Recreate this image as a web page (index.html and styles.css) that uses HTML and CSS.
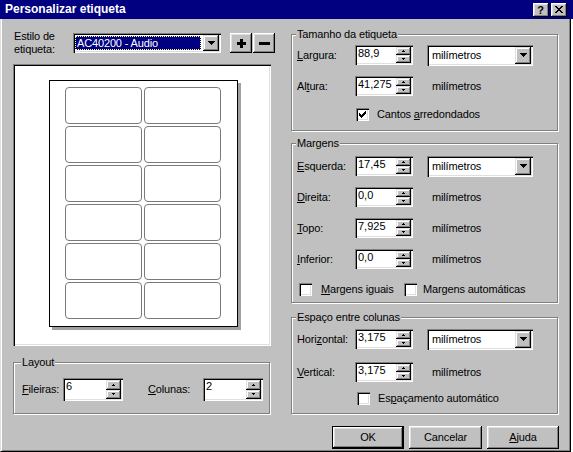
FILE: index.html
```html
<!DOCTYPE html>
<html lang="pt">
<head>
<meta charset="utf-8">
<title>Personalizar etiqueta</title>
<link rel="stylesheet" href="styles.css">
</head>
<body>
<div class="window">
  <div class="titlebar">
    <span class="title">Personalizar etiqueta</span>
    <div class="tb-buttons">
      <span class="tb-btn help">?</span>
      <span class="tb-btn close"><svg width="8" height="7" viewBox="0 0 8 7"><path d="M0 0h2v1H0zM6 0h2v1H6zM1 1h2v1H1zM5 1h2v1H5zM2 2h4v1H2zM3 3h2v1H3zM2 4h4v1H2zM1 5h2v1H1zM5 5h2v1H5zM0 6h2v1H0zM6 6h2v1H6z" fill="#000"/></svg></span>
    </div>
  </div>
  <div class="client">
    <div class="main">
      <div class="left">
        <div class="style-row">
          <span class="style-label">Estilo de<br>etiqueta:</span>
          <div class="combo style-combo">
            <span class="combo-text selected">AC40200 - Audio</span>
            <span class="drop"><svg width="7" height="4" viewBox="0 0 7 4"><path d="M0 0h7v1H6v1H5v1H4v1H3V3H2V2H1V1H0z" fill="#000"/></svg></span>
          </div>
          <div class="pm">
            <span class="btn pm-btn"><svg width="9" height="9" viewBox="0 0 9 9"><path d="M3 0h3v3h3v3H6v3H3V6H0V3h3z" fill="#000"/></svg></span>
            <span class="btn pm-btn"><svg width="11" height="3" viewBox="0 0 11 3"><path d="M0 0h11v3H0z" fill="#000"/></svg></span>
          </div>
        </div>
        <div class="preview">
          <div class="page">
            <div class="lab"></div><div class="lab"></div>
            <div class="lab"></div><div class="lab"></div>
            <div class="lab"></div><div class="lab"></div>
            <div class="lab"></div><div class="lab"></div>
            <div class="lab"></div><div class="lab"></div>
            <div class="lab"></div><div class="lab"></div>
          </div>
        </div>
        <fieldset class="group layout-group">
          <legend>Layout</legend>
          <div class="lrow">
            <span class="llabel fil"><u>F</u>ileiras:</span>
            <div class="spin tall"><span class="val">6</span><span class="arrows"><span class="up"><svg width="3" height="2" viewBox="0 0 3 2"><path d="M1 0h1v1h1v1H0V1h1z"/></svg></span><span class="down"><svg width="3" height="2" viewBox="0 0 3 2"><path d="M0 0h3v1H2v1H1V1H0z"/></svg></span></span></div>
            <span class="llabel col"><u>C</u>olunas:</span>
            <div class="spin tall"><span class="val">2</span><span class="arrows"><span class="up"><svg width="3" height="2" viewBox="0 0 3 2"><path d="M1 0h1v1h1v1H0V1h1z"/></svg></span><span class="down"><svg width="3" height="2" viewBox="0 0 3 2"><path d="M0 0h3v1H2v1H1V1H0z"/></svg></span></span></div>
          </div>
        </fieldset>
      </div>

      <div class="right">
        <fieldset class="group size-group">
          <legend>Tamanho da etiqueta</legend>
          <div class="rows">
            <div class="frow">
              <span class="flabel"><u>L</u>argura:</span>
              <div class="spin"><span class="val">88,9</span><span class="arrows"><span class="up"><svg width="3" height="2" viewBox="0 0 3 2"><path d="M1 0h1v1h1v1H0V1h1z"/></svg></span><span class="down"><svg width="3" height="2" viewBox="0 0 3 2"><path d="M0 0h3v1H2v1H1V1H0z"/></svg></span></span></div>
              <div class="combo units"><span class="combo-text">milímetros</span><span class="drop"><svg width="7" height="4" viewBox="0 0 7 4"><path d="M0 0h7v1H6v1H5v1H4v1H3V3H2V2H1V1H0z" fill="#000"/></svg></span></div>
            </div>
            <div class="frow">
              <span class="flabel">Al<u>t</u>ura:</span>
              <div class="spin"><span class="val">41,275</span><span class="arrows"><span class="up"><svg width="3" height="2" viewBox="0 0 3 2"><path d="M1 0h1v1h1v1H0V1h1z"/></svg></span><span class="down"><svg width="3" height="2" viewBox="0 0 3 2"><path d="M0 0h3v1H2v1H1V1H0z"/></svg></span></span></div>
              <span class="unit-text">milímetros</span>
            </div>
            <div class="crow size-check">
              <span class="cb"><svg width="7" height="7" viewBox="0 0 7 7"><path d="M0 2h1v3H0zM1 3h1v3H1zM2 4h1v3H2zM3 3h1v3H3zM4 2h1v3H4zM5 1h1v3H5zM6 0h1v3H6z" fill="#000"/></svg></span>
              <span class="ctext">Cantos <u>a</u>rredondados</span>
            </div>
          </div>
        </fieldset>

        <fieldset class="group margin-group">
          <legend>Margens</legend>
          <div class="rows">
            <div class="frow">
              <span class="flabel"><u>E</u>squerda:</span>
              <div class="spin"><span class="val">17,45</span><span class="arrows"><span class="up"><svg width="3" height="2" viewBox="0 0 3 2"><path d="M1 0h1v1h1v1H0V1h1z"/></svg></span><span class="down"><svg width="3" height="2" viewBox="0 0 3 2"><path d="M0 0h3v1H2v1H1V1H0z"/></svg></span></span></div>
              <div class="combo units"><span class="combo-text">milímetros</span><span class="drop"><svg width="7" height="4" viewBox="0 0 7 4"><path d="M0 0h7v1H6v1H5v1H4v1H3V3H2V2H1V1H0z" fill="#000"/></svg></span></div>
            </div>
            <div class="frow">
              <span class="flabel"><u>D</u>ireita:</span>
              <div class="spin"><span class="val">0,0</span><span class="arrows"><span class="up"><svg width="3" height="2" viewBox="0 0 3 2"><path d="M1 0h1v1h1v1H0V1h1z"/></svg></span><span class="down"><svg width="3" height="2" viewBox="0 0 3 2"><path d="M0 0h3v1H2v1H1V1H0z"/></svg></span></span></div>
              <span class="unit-text">milímetros</span>
            </div>
            <div class="frow">
              <span class="flabel"><u>T</u>opo:</span>
              <div class="spin"><span class="val">7,925</span><span class="arrows"><span class="up"><svg width="3" height="2" viewBox="0 0 3 2"><path d="M1 0h1v1h1v1H0V1h1z"/></svg></span><span class="down"><svg width="3" height="2" viewBox="0 0 3 2"><path d="M0 0h3v1H2v1H1V1H0z"/></svg></span></span></div>
              <span class="unit-text">milímetros</span>
            </div>
            <div class="frow">
              <span class="flabel"><u>I</u>nferior:</span>
              <div class="spin"><span class="val">0,0</span><span class="arrows"><span class="up"><svg width="3" height="2" viewBox="0 0 3 2"><path d="M1 0h1v1h1v1H0V1h1z"/></svg></span><span class="down"><svg width="3" height="2" viewBox="0 0 3 2"><path d="M0 0h3v1H2v1H1V1H0z"/></svg></span></span></div>
              <span class="unit-text">milímetros</span>
            </div>
            <div class="crow margin-checks">
              <div class="citem first">
                <span class="cb"></span>
                <span class="ctext"><u>M</u>argens iguais</span>
              </div>
              <div class="citem second">
                <span class="cb"></span>
                <span class="ctext">Margens automáticas</span>
              </div>
            </div>
          </div>
        </fieldset>

        <fieldset class="group gap-group">
          <legend>Espaço entre colunas</legend>
          <div class="rows">
            <div class="frow">
              <span class="flabel">Hori<u>z</u>ontal:</span>
              <div class="spin"><span class="val">3,175</span><span class="arrows"><span class="up"><svg width="3" height="2" viewBox="0 0 3 2"><path d="M1 0h1v1h1v1H0V1h1z"/></svg></span><span class="down"><svg width="3" height="2" viewBox="0 0 3 2"><path d="M0 0h3v1H2v1H1V1H0z"/></svg></span></span></div>
              <div class="combo units"><span class="combo-text">milímetros</span><span class="drop"><svg width="7" height="4" viewBox="0 0 7 4"><path d="M0 0h7v1H6v1H5v1H4v1H3V3H2V2H1V1H0z" fill="#000"/></svg></span></div>
            </div>
            <div class="frow">
              <span class="flabel"><u>V</u>ertical:</span>
              <div class="spin"><span class="val">3,175</span><span class="arrows"><span class="up"><svg width="3" height="2" viewBox="0 0 3 2"><path d="M1 0h1v1h1v1H0V1h1z"/></svg></span><span class="down"><svg width="3" height="2" viewBox="0 0 3 2"><path d="M0 0h3v1H2v1H1V1H0z"/></svg></span></span></div>
              <span class="unit-text">milímetros</span>
            </div>
            <div class="crow gap-check">
              <span class="cb"></span>
              <span class="ctext">Es<u>p</u>açamento automático</span>
            </div>
          </div>
        </fieldset>
      </div>
    </div>

    <div class="buttons">
      <span class="btn dlg-btn default">OK</span>
      <span class="btn dlg-btn wide">Cancelar</span>
      <span class="btn dlg-btn"><u>A</u>juda</span>
    </div>
  </div>
</div>
</body>
</html>
```

FILE: styles.css
```css
* { box-sizing: border-box; }

html { background: #ffffff; }

body {
  margin: 0;
  font-family: "Liberation Sans", Arial, sans-serif;
  font-size: 11px;
  letter-spacing: -0.15px;
  color: #000;
  line-height: 13px;
}

u { text-decoration: underline; text-underline-offset: 1px; }

.window {
  width: 573px;
  height: 452px;
  display: flex;
  flex-direction: column;
}

/* title bar */
.titlebar {
  height: 19px;
  flex: none;
  background: #000080;
  display: flex;
  align-items: center;
  justify-content: space-between;
  padding: 0 6px 0 5px;
}

.title {
  color: #fff;
  font-weight: bold;
  font-size: 12px;
  letter-spacing: 0;
}

.tb-buttons {
  display: flex;
  gap: 2px;
}

.tb-btn {
  width: 16px;
  height: 14px;
  background: #c0c0c0;
  box-shadow: inset -1px -1px 0 #000, inset 1px 1px 0 #fff, inset -2px -2px 0 #808080, inset 2px 2px 0 #dfdfdf;
  display: flex;
  align-items: center;
  justify-content: center;
}

.tb-btn.help {
  font-weight: bold;
  font-size: 11px;
  line-height: 12px;
  padding-right: 1px;
}

/* client area */
.client {
  flex: 1;
  width: 571px;
  background: #c0c0c0;
  border-left: 1px solid #dfdfdf;
  border-right: 1px solid #000;
  border-bottom: 1px solid #000;
  box-shadow: inset 1px 0 0 #fff, inset -1px -1px 0 #808080;
  display: flex;
  flex-direction: column;
}

.main {
  display: flex;
  padding-left: 12px;
  gap: 15px;
}

.left {
  width: 263px;
  padding-top: 11px;
  display: flex;
  flex-direction: column;
}

.right {
  width: 267px;
  padding-top: 9px;
  display: flex;
  flex-direction: column;
}

/* style row */
.style-row {
  display: flex;
  align-items: flex-start;
  height: 26px;
}

.style-label {
  width: 60px;
  padding-left: 1px;
  line-height: 13px;
}

.style-combo {
  margin-top: 3px;
  width: 148px;
  height: 20px;
}

.pm {
  margin-top: 3px;
  margin-left: 9px;
  display: flex;
  gap: 1px;
}

.btn {
  background: #c0c0c0;
  box-shadow: inset -1px -1px 0 #000, inset 1px 1px 0 #fff, inset -2px -2px 0 #808080, inset 2px 2px 0 #dfdfdf;
  display: flex;
  align-items: center;
  justify-content: center;
}

.pm-btn {
  width: 22px;
  height: 20px;
}

/* sunken controls */
.combo, .spin, .cb, .preview {
  background: #fff;
  box-shadow: inset 1px 1px 0 #808080, inset 2px 2px 0 #000, inset -1px -1px 0 #fff, inset -2px -2px 0 #dfdfdf;
}

.combo {
  display: flex;
  padding: 2px;
}

.combo-text {
  flex: 1;
  padding-left: 3px;
  line-height: 16px;
  white-space: nowrap;
}

.combo-text.selected {
  background: #000080;
  color: #fff;
  margin: 1px 2px 1px 0;
  padding-left: 2px;
  line-height: 14px;
  outline: 1px dotted #ffffa0;
  outline-offset: -1px;
}

.drop {
  width: 16px;
  background: #c0c0c0;
  box-shadow: inset -1px -1px 0 #000, inset 1px 1px 0 #dfdfdf, inset -2px -2px 0 #808080, inset 2px 2px 0 #fff;
  display: flex;
  align-items: center;
  justify-content: center;
}

.units {
  margin-left: 14px;
  width: 106px;
  height: 21px;
}

/* preview */
.preview {
  margin-top: 8px;
  width: 258px;
  height: 282px;
  padding: 16px 0 0 36px;
}

.page {
  width: 189px;
  height: 247px;
  background: #fff;
  border: 1px solid #000;
  box-shadow: 3px 3px 0 #a0a0a0;
  padding: 6px 0 0 15px;
  display: grid;
  grid-template-columns: 77px 77px;
  grid-auto-rows: 37px;
  column-gap: 2px;
  row-gap: 2px;
}

.lab {
  border: 1px solid #7a7a7a;
  border-radius: 4px;
}

/* group boxes */
.group {
  margin: 0;
  min-width: 0;
  border: 1px solid #808080;
  box-shadow: 1px 1px 0 #fff, inset 1px 1px 0 #fff;
}

.group legend {
  padding: 0 1px;
  margin-left: -1px;
  line-height: 13px;
  background: #c0c0c0;
}

.layout-group {
  margin-top: 10px;
  width: 257px;
  padding: 9px 0 12px 8px;
}

.lrow {
  display: flex;
  align-items: center;
  height: 23px;
}

.llabel.fil { width: 41px; }
.llabel.col { width: 55px; margin-left: 25px; }

.spin {
  display: flex;
  width: 58px;
  height: 20px;
  padding: 2px;
}

.spin.tall {
  width: 60px;
  height: 23px;
}

.val {
  flex: 1;
  padding-left: 1px;
  line-height: 13px;
  letter-spacing: 0;
  white-space: nowrap;
}

.arrows {
  width: 15px;
  display: flex;
  flex-direction: column;
}

.up, .down {
  flex: 1;
  background: #c0c0c0;
  box-shadow: inset -1px -1px 0 #000, inset 1px 1px 0 #dfdfdf, inset -2px -2px 0 #808080, inset 2px 2px 0 #fff;
  display: flex;
  align-items: center;
  justify-content: center;
}

.up svg, .down svg { fill: #000; }

.size-group {
  padding: 3px 0 8px 5px;
}

.margin-group {
  margin-top: 6px;
  padding: 5px 0 5px 5px;
}

.gap-group {
  margin-top: 8px;
  padding: 4px 0 7px 5px;
}

.rows {
  display: flex;
  flex-direction: column;
  gap: 9px;
}

.gap-group .rows { gap: 11px; }

.frow {
  display: flex;
  align-items: center;
  height: 22px;
}

.flabel { width: 58px; }

.unit-text { margin-left: 19px; }

.crow {
  display: flex;
  align-items: center;
  height: 16px;
}

.cb {
  width: 13px;
  height: 13px;
  flex: none;
  display: flex;
  align-items: center;
  justify-content: center;
}

.size-check { padding-left: 59px; }
.size-check .ctext { margin-left: 8px; }

.margin-checks { margin-top: 2px; padding-left: 2px; }

.citem {
  display: flex;
  align-items: center;
}

.citem.first { width: 105px; }
.citem.first .ctext { margin-left: 9px; }
.citem.second .ctext { margin-left: 6px; }

.gap-check { margin-top: -4px; padding-left: 60px; }
.gap-check .ctext { margin-left: 8px; }

/* dialog buttons */
.buttons {
  margin-top: 12px;
  display: flex;
  justify-content: flex-end;
  gap: 5px;
  padding-right: 11px;
}

.dlg-btn {
  width: 72px;
  height: 23px;
}

.dlg-btn.wide { width: 73px; }

.dlg-btn.default {
  border: 1px solid #000;
}
```
